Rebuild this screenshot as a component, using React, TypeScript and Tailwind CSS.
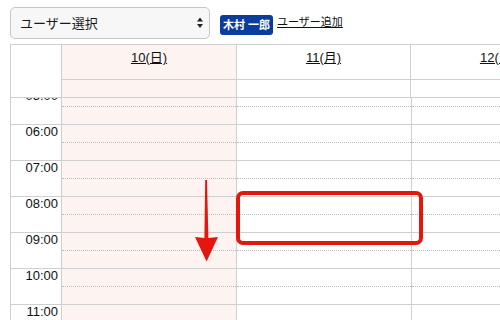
import React from 'react';

const hours = ['05:00', '06:00', '07:00', '08:00', '09:00', '10:00', '11:00', '12:00'];

const days = [
  { label: '10(日)', holiday: true, head: 'w-[175px]', body: 'w-[175px]' },
  { label: '11(月)', holiday: false, head: 'w-[174px]', body: 'w-[175px]' },
  { label: '12(火)', holiday: false, head: 'w-[175px]', body: 'w-[175px]' },
];

export default function App() {
  return (
    <div
      className="relative w-[500px] h-[320px] overflow-hidden bg-white text-[#111]"
      style={{ fontFamily: "'Liberation Sans', 'Noto Sans CJK JP', sans-serif" }}
    >
      {/* Toolbar */}
      <div className="flex items-start pl-[10px] pt-[7px]">
        <div className="w-[200px] h-[32px] rounded-[5px] border border-[#c6c6c6] bg-[#f7f7f7] flex items-center justify-between pl-[9px] pr-[4px]">
          <span className="text-[13px] leading-none text-[#1a1a1a]">ユーザー選択</span>
          <svg width="8" height="12" viewBox="0 0 8 12" className="mr-[1px]">
            <polygon points="4,0.5 7,4.5 1,4.5" fill="#222" />
            <polygon points="4,11 7,7 1,7" fill="#222" />
          </svg>
        </div>
        <div className="ml-[10px] mt-[8px] h-[20px] px-[3px] rounded-[3px] bg-[#0b3d9c] flex items-center text-white text-[11px] font-bold leading-none">
          木村 一郎
        </div>
        <a className="ml-[4px] mt-[9px] text-[11px] leading-[13px] underline text-[#111]">ユーザー追加</a>
      </div>

      {/* Calendar */}
      <div className="ml-[10px] mt-[5px] border-l border-t border-[#cfcfcf] flex flex-col h-[276px]">
        <div className="flex shrink-0">
          <div className="w-[51px] h-[53px] border-r border-b border-[#cfcfcf] shrink-0" />
          {days.map((d) => (
            <div
              key={d.label}
              className={`${d.head} shrink-0 border-r border-[#cfcfcf] ${d.holiday ? 'bg-[#fdf3f0]' : ''}`}
            >
              <div className="h-[35px] border-b border-[#cfcfcf] text-center">
                <span className="text-[13px] leading-[15px] underline">{d.label}</span>
              </div>
              <div className="h-[18px] border-b border-[#cfcfcf]" />
            </div>
          ))}
        </div>

        <div className="flex-1 overflow-hidden">
          <div className="-mt-[9px]">
            {hours.map((h) => (
              <div key={h} className="flex h-[36px] border-b border-[#cfcfcf]">
                <div className="w-[51px] shrink-0 border-r border-[#cfcfcf] text-right pr-[3px] text-[13px] leading-[13px]">
                  {h}
                </div>
                {days.map((d) => (
                  <div
                    key={d.label}
                    className={`${d.body} shrink-0 border-r border-[#cfcfcf] ${d.holiday ? 'bg-[#fdf3f0]' : ''}`}
                  >
                    <div className="h-[18px] border-b border-dotted border-[#bdbdbd]" />
                  </div>
                ))}
              </div>
            ))}
          </div>
        </div>
      </div>

      {/* Annotations */}
      <div className="absolute left-[236px] top-[191px] w-[187px] h-[54px] border-4 border-[#e3170d] rounded-[7px]" />
      <svg className="absolute left-[190px] top-[175px]" width="35" height="92" viewBox="190 175 35 92">
        <polygon
          points="205.2,180 207,180 208.4,238 218,237 206.6,261.5 195,237 204.4,238"
          fill="#e3170d"
        />
      </svg>
    </div>
  );
}
